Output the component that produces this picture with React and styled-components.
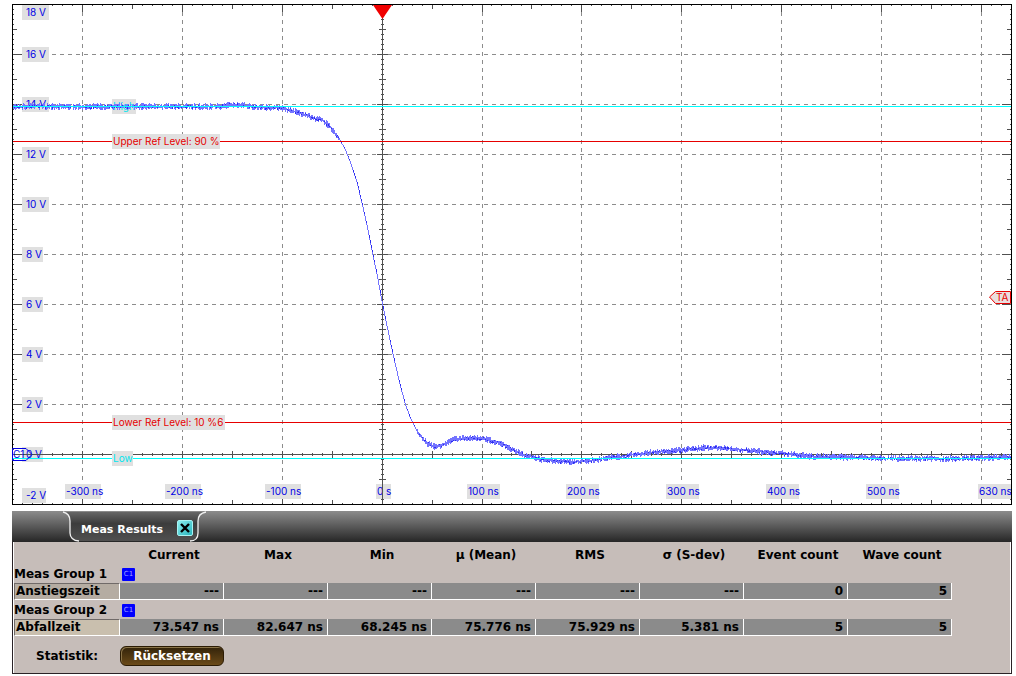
import React from 'react';
import styled, { createGlobalStyle } from 'styled-components';

const GlobalStyle = createGlobalStyle`
  body {
    margin: 0;
    background-color: #ffffff;
  }
`;

const columns = ['Current', 'Max', 'Min', 'µ (Mean)', 'RMS', 'σ (S-dev)', 'Event count', 'Wave count'];

const groups = [
  {
    name: 'Meas Group 1',
    source: 'C1',
    label: 'Anstiegszeit',
    values: ['---', '---', '---', '---', '---', '---', '0', '5'],
  },
  {
    name: 'Meas Group 2',
    source: 'C1',
    label: 'Abfallzeit',
    active: true,
    values: ['73.547 ns', '82.647 ns', '68.245 ns', '75.776 ns', '75.929 ns', '5.381 ns', '5', '5'],
  },
];

const gridX = [70, 170, 270, 370, 470, 569, 669, 769, 869, 969];
const gridY = [50, 100, 150, 200, 250, 300, 350, 400];

const voltLabels = [
  { text: '18 V', y: 1, w: 27 },
  { text: '16 V', y: 43, w: 27 },
  { text: '14 V', y: 93, w: 27 },
  { text: '12 V', y: 143, w: 27 },
  { text: '10 V', y: 193, w: 27 },
  { text: '8 V', y: 243, w: 21 },
  { text: '6 V', y: 293, w: 21 },
  { text: '4 V', y: 343, w: 21 },
  { text: '2 V', y: 393, w: 21 },
  { text: '0 V', y: 443, w: 21 },
  { text: '-2 V', y: 484, w: 24 },
];

const timeLabels = [
  { text: '-300 ns', x: 53, w: 36 },
  { text: '-200 ns', x: 153, w: 36 },
  { text: '-100 ns', x: 253, w: 36 },
  { text: '0 s', x: 364, w: 15 },
  { text: '100 ns', x: 455, w: 33 },
  { text: '200 ns', x: 554, w: 33 },
  { text: '300 ns', x: 654, w: 33 },
  { text: '400 ns', x: 754, w: 33 },
  { text: '500 ns', x: 854, w: 33 },
  { text: '630 ns', x: 966, w: 33 },
];

const wave = [
  [0, 102], [150, 102], [205, 102], [220, 100], [232, 101], [245, 103], [268, 103], [280, 106],
  [288, 109], [298, 112], [304, 114], [310, 116], [314, 119], [318, 123], [323, 129], [328, 136],
  [333, 145], [338, 157], [341, 166], [345, 178], [350, 199], [355, 221], [360, 246], [366, 275],
  [370, 297], [374, 317], [381, 350], [387, 376], [393, 399], [398, 413], [401, 419], [405, 427],
  [410, 434], [415, 439], [420, 441], [423, 442], [428, 441], [435, 438], [441, 435], [448, 434],
  [458, 433], [470, 434], [481, 437], [488, 439], [496, 443], [508, 449], [521, 453], [531, 455],
  [545, 457], [560, 457], [581, 456], [595, 453], [608, 452], [621, 450], [648, 447], [668, 446],
  [681, 444], [695, 443], [708, 443], [725, 445], [741, 446], [751, 448], [768, 449], [781, 450],
  [798, 452], [848, 453], [881, 454], [948, 454], [981, 453], [999, 452],
];

// fixed seed, so the noise on the trace is the same on every render
function buildTrace() {
  let seed = 7;
  const random = () => {
    seed = (seed * 16807) % 2147483647;
    return seed / 2147483647;
  };
  let band = '';
  let core = '';
  for (let i = 0; i < wave.length - 1; i++) {
    const [x1, y1] = wave[i];
    const [x2, y2] = wave[i + 1];
    const slope = (y2 - y1) / (x2 - x1);
    const noise = Math.abs(slope) > 1.5 ? 0 : 3;
    for (let x = x1; x < x2; x++) {
      const y = y1 + slope * (x - x1);
      const top = y - random() * noise;
      const bottom = y + Math.max(slope, 1) + random() * noise;
      band += `M${x + 0.5} ${top.toFixed(1)}V${bottom.toFixed(1)}`;
      if (random() > 0.5) {
        const mid = y + (random() - 0.5) * noise;
        core += `M${x + 0.5} ${mid.toFixed(1)}v${Math.max(slope / 2, 1.2).toFixed(1)}`;
      }
    }
  }
  return { band, core };
}

function buildTicks() {
  let d = '';
  for (let y = 5; y < 500; y += 5) {
    const major = y % 50 === 0;
    const mid = y % 25 === 0;
    const edge = major ? 9 : mid ? 4 : 1;
    const half = major ? 5 : mid ? 3 : 1;
    d += `M1 ${y + 0.5}h${edge}M999 ${y + 0.5}h-${edge}`;
    d += `M${370 - half} ${y + 0.5}h${half * 2 + 1}`;
  }
  for (let x = 10; x < 1000; x += 10) {
    const px = (x > 470 ? x - 1 : x) + 0.5;
    const major = (x - 70) % 100 === 0;
    const mid = (x - 20) % 50 === 0;
    const edge = major ? 7 : mid ? 4 : 1;
    const half = major || mid ? 3 : 1;
    d += `M${px} 1v${edge}M${px} 500v-${edge}`;
    d += `M${px} ${450 - half}v${half * 2 + 1}`;
  }
  return d;
}

const trace = buildTrace();
const ticks = buildTicks();

function Tag({ x, y, w, text, color, pad = 4 }) {
  return (
    <g>
      <rect x={x} y={y} width={w} height={15} fill="#e0e0e0" />
      <ChartText x={x + pad} y={y + 11} fill={color}>
        {text}
      </ChartText>
    </g>
  );
}

function Diagram() {
  return (
    <Chart viewBox="0 0 1000 501" role="img" aria-label="C1">
      <g shapeRendering="crispEdges" fill="none">
        <g stroke="#8c8c8c" strokeDasharray="4 4">
          {gridY.map((y) => (
            <path key={y} d={`M0 ${y + 0.5}H1000`} />
          ))}
          {gridX.map((x) => (
            <path key={x} d={`M${x + 0.5} 0V477`} />
          ))}
        </g>
        <path d="M370.5 0V500M0 450.5H1000" stroke="#505050" />
        <path d={ticks} stroke="#505050" />
      </g>

      {voltLabels.map((l) => (
        <Tag key={l.text} x={10} y={l.y} w={l.w} text={l.text} color="#0000e6" />
      ))}
      {timeLabels.map((l) => (
        <Tag key={l.text} x={l.x} y={480} w={l.w} text={l.text} color="#0000e6" pad={1} />
      ))}
      <Tag x={100} y={95} w={24} text="High" color="#00e5ee" pad={1} />
      <Tag x={100} y={447} w={21} text="Low" color="#00e5ee" pad={1} />

      <g shapeRendering="crispEdges" fill="none">
        <path d="M370.5 470V500M10 450.5H31" stroke="#505050" />
        <path d={trace.band} stroke="#7474ff" />
        <path d={trace.core} stroke="#2c2cf0" />
        <path d="M0 102.5H1000M0 454.5H100M121 454.5H1000" stroke="#00ffff" />
        <path d="M0 137.5H1000M0 418.5H1000" stroke="#e60000" />
        <path d="M0.5 0.5H999.5V500.5H0.5Z" stroke="#000000" />
      </g>

      <Tag x={100} y={130} w={108} text="Upper Ref Level: 90 %" color="#e60000" pad={1} />
      <Tag x={100} y={411} w={113} text="Lower Ref Level: 10 %6" color="#e60000" pad={1} />

      <path d="M361 1H380L370.5 15Z" fill="#f00000" />
      <path d="M0.5 444.5H14L20 450.5L14 456.5H0.5Z" fill="none" stroke="#0000e6" />
      <ChartText x="1" y="454" fill="#0000e6">
        C1
      </ChartText>
      <path d="M977.5 293L983.5 287.5H998.5V299.5H983.5Z" fill="#eadede" stroke="#e60000" />
      <ChartText x="984" y="297" fill="#e60000">
        TA
      </ChartText>
    </Chart>
  );
}

export default function App() {
  return (
    <Page>
      <GlobalStyle />
      <Diagram />

      <Panel>
        <TabBar>
          <Tab>
            <TabShape viewBox="0 0 146 31" aria-hidden="true">
              <defs>
                <linearGradient id="tabFill" x1="0" y1="0" x2="0" y2="1">
                  <stop offset="0" stopColor="#666666" />
                  <stop offset="0.4" stopColor="#3c3c3c" />
                  <stop offset="1" stopColor="#505050" />
                </linearGradient>
              </defs>
              <path
                d="M1 1C6 2 8 5 8 10V22C8 26 11 30 17 30H128C134 30 136 26 136 22V10C136 5 138 2 144 1Z"
                fill="url(#tabFill)"
              />
              <path
                d="M1 1C6 2 8 5 8 10V22C8 26 11 30 17 30M128 30C134 30 136 26 136 22V10C136 5 138 2 144 1"
                fill="none"
                stroke="#f0f0f0"
                strokeWidth="1.3"
              />
            </TabShape>
            <TabTitle>Meas Results</TabTitle>
            <CloseButton type="button" aria-label="Meas Results">
              <svg width="10" height="10" viewBox="0 0 10 10">
                <path d="M1 1L9 9M9 1L1 9" stroke="#000000" strokeWidth="2.4" />
              </svg>
            </CloseButton>
          </Tab>
        </TabBar>

        <PanelBody>
          <Table>
            <colgroup>
              <LabelCol />
              {columns.map((name) => (
                <ValueCol key={name} />
              ))}
            </colgroup>
            <thead>
              <tr>
                <td />
                {columns.map((name) => (
                  <ColumnHead key={name} scope="col">
                    {name}
                  </ColumnHead>
                ))}
              </tr>
            </thead>
            {groups.map((group) => (
              <tbody key={group.name}>
                <tr>
                  <GroupHead scope="rowgroup">{group.name}</GroupHead>
                  <GroupCell colSpan={8}>
                    <SourceBadge>{group.source}</SourceBadge>
                  </GroupCell>
                </tr>
                <tr>
                  <RowHead scope="row" $active={group.active}>
                    {group.label}
                  </RowHead>
                  {group.values.map((value, i) => (
                    <Value key={columns[i]}>{value}</Value>
                  ))}
                </tr>
              </tbody>
            ))}
          </Table>

          <Footer>
            <FooterLabel id="statistik">Statistik:</FooterLabel>
            <ResetButton type="button" aria-describedby="statistik">
              Rücksetzen
            </ResetButton>
          </Footer>
        </PanelBody>
      </Panel>
    </Page>
  );
}

const Page = styled.main`
  display: flex;
  flex-direction: column;
  gap: 6px;
  padding: 4px 4px 1px 12px;
  font-family: 'DejaVu Sans', Verdana, sans-serif;
  font-size: 12px;
  font-weight: bold;
  color: #000000;
`;

const Chart = styled.svg`
  display: block;
  width: 100%;
  height: auto;
`;

const ChartText = styled.text`
  font-family: Inter, Arial, sans-serif;
  font-size: 10px;
  font-weight: normal;
`;

const Panel = styled.section`
  display: flex;
  flex-direction: column;
`;

const TabBar = styled.div`
  display: flex;
  height: 31px;
  padding-left: 50px;
  background: linear-gradient(#8c8c8c, #262626);
`;

const Tab = styled.div`
  position: relative;
  display: flex;
  align-items: center;
  gap: 14px;
  width: 146px;
  padding: 3px 0 0 19px;
  box-sizing: border-box;
`;

const TabShape = styled.svg`
  position: absolute;
  inset: 0;
  width: 100%;
  height: 100%;
`;

const TabTitle = styled.span`
  position: relative;
  padding-top: 2px;
  white-space: nowrap;
  font-size: 11px;
  color: #ffffff;
`;

const CloseButton = styled.button`
  position: relative;
  display: flex;
  align-items: center;
  justify-content: center;
  flex: none;
  width: 16px;
  height: 16px;
  padding: 0;
  border: 1px solid #a8f4f4;
  border-radius: 2px;
  background: linear-gradient(135deg, #8cf0f0, #28b4bc);
`;

const PanelBody = styled.div`
  padding: 3px 0 7px 1px;
  border: 1px solid #2a2226;
  border-top: none;
  background-color: #c6bdb9;
  box-shadow: inset 1px 0 #ffffff, inset -1px 0 #ffffff;
`;

const Table = styled.table`
  table-layout: fixed;
  width: 938px;
  border-collapse: separate;
  border-spacing: 0;

  th,
  td {
    box-sizing: border-box;
    padding: 0;
    line-height: 15px;
    white-space: nowrap;
  }
`;

const LabelCol = styled.col`
  width: 106px;
`;

const ValueCol = styled.col`
  width: 104px;
`;

const ColumnHead = styled.th`
  height: 19px;
  text-align: center;
  padding: 1px 0 0 4px !important;
`;

const GroupHead = styled.th`
  height: 19px;
  padding-top: 2px !important;
  text-align: left;
`;

const GroupCell = styled.td`
  padding: 2px 0 0 2px !important;
`;

const SourceBadge = styled.span`
  display: block;
  width: 13px;
  height: 13px;
  border-radius: 1px;
  background-color: #0000ff;
  color: #a0a0ff;
  font-size: 7px;
  font-weight: normal;
  line-height: 13px;
  text-align: center;
`;

const RowHead = styled.th`
  height: 17px;
  padding-left: 1px !important;
  border: 1px solid #ffffff;
  border-top-color: #706a68;
  border-left-color: #706a68;
  background-color: ${({ $active }) => ($active ? '#c9bfae' : '#b5aca2')};
  text-align: left;
`;

const Value = styled.td`
  height: 17px;
  padding: 1px 4px 0 0 !important;
  border-right: 1px solid #ffffff;
  border-bottom: 1px solid #ffffff;
  background-color: #8b8b8b;
  text-align: right;
`;

const Footer = styled.div`
  display: flex;
  align-items: center;
  padding-top: 10px;
`;

const FooterLabel = styled.span`
  width: 84px;
  padding-left: 22px;
`;

const ResetButton = styled.button`
  width: 104px;
  height: 20px;
  padding: 0;
  border: 1px solid #2c1c04;
  border-radius: 6px;
  background: linear-gradient(#33230a, #6a4a18);
  box-shadow: inset 1px 1px #8a7448;
  color: #ffffff;
  font: inherit;
`;
